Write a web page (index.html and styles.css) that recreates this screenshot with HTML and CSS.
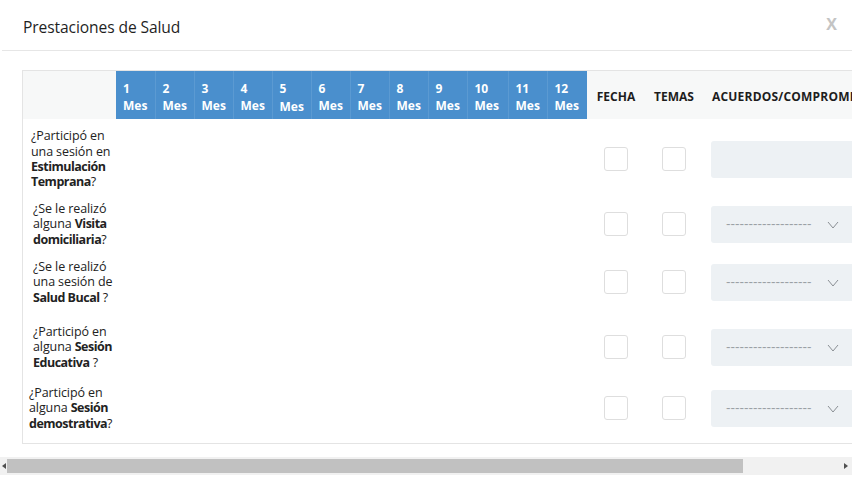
FILE: index.html
```html
<!DOCTYPE html>
<html lang="es">
<head>
<meta charset="utf-8">
<title>Prestaciones de Salud</title>
<link rel="stylesheet" href="styles.css">
</head>
<body>
<div class="modal">
  <div class="modal-header">
    <h1 class="title">Prestaciones de Salud</h1>
    <span class="close">X</span>
  </div>
  <div class="scroller">
    <div class="table-wrap">
      <table class="grid">
        <thead>
          <tr class="head-row">
            <th class="c-q"></th>
            <th class="c-m c-first">1<br>Mes</th>
            <th class="c-m">2<br>Mes</th>
            <th class="c-m">3<br>Mes</th>
            <th class="c-m">4<br>Mes</th>
            <th class="c-m">5<br><span class="low">Mes</span></th>
            <th class="c-m">6<br>Mes</th>
            <th class="c-m">7<br>Mes</th>
            <th class="c-m">8<br>Mes</th>
            <th class="c-m">9<br>Mes</th>
            <th class="c-m c-wide">10<br>Mes</th>
            <th class="c-m">11<br>Mes</th>
            <th class="c-m c-wide1">12<br>Mes</th>
            <th class="c-chk">FECHA</th>
            <th class="c-chk">TEMAS</th>
            <th class="c-acu">ACUERDOS/COMPROMISOS</th>
          </tr>
        </thead>
        <tbody>
          <tr class="r1">
            <td class="q">¿Participó en<br>una sesión en<br><b>Estimulación</b><br><b>Temprana</b>?</td>
            <td colspan="12"></td>
            <td class="chk-cell"><span class="chk"></span></td>
            <td class="chk-cell"><span class="chk"></span></td>
            <td class="acu"><div class="field"></div></td>
          </tr>
          <tr class="r2">
            <td class="q q-in">¿Se le realizó<br>alguna <b>Visita</b><br><b>domiciliaria</b>?</td>
            <td colspan="12"></td>
            <td class="chk-cell"><span class="chk"></span></td>
            <td class="chk-cell"><span class="chk"></span></td>
            <td class="acu"><div class="field select"><span class="dashes">-------------------</span><svg class="chev" width="12" height="8" viewBox="0 0 12 8"><path d="M1 1 L6 7 L11 1" fill="none" stroke="#8a8f94" stroke-width="1"/></svg></div></td>
          </tr>
          <tr class="r3">
            <td class="q q-in">¿Se le realizó<br>una sesión de<br><b>Salud Bucal</b> ?</td>
            <td colspan="12"></td>
            <td class="chk-cell"><span class="chk"></span></td>
            <td class="chk-cell"><span class="chk"></span></td>
            <td class="acu"><div class="field select"><span class="dashes">-------------------</span><svg class="chev" width="12" height="8" viewBox="0 0 12 8"><path d="M1 1 L6 7 L11 1" fill="none" stroke="#8a8f94" stroke-width="1"/></svg></div></td>
          </tr>
          <tr class="r4">
            <td class="q q-in">¿Participó en<br>alguna <b>Sesión</b><br><b>Educativa</b> ?</td>
            <td colspan="12"></td>
            <td class="chk-cell"><span class="chk"></span></td>
            <td class="chk-cell"><span class="chk"></span></td>
            <td class="acu"><div class="field select"><span class="dashes">-------------------</span><svg class="chev" width="12" height="8" viewBox="0 0 12 8"><path d="M1 1 L6 7 L11 1" fill="none" stroke="#8a8f94" stroke-width="1"/></svg></div></td>
          </tr>
          <tr class="r5">
            <td class="q q-out">¿Participó en<br>alguna <b>Sesión</b><br><b>demostrativa</b>?</td>
            <td colspan="12"></td>
            <td class="chk-cell"><span class="chk"></span></td>
            <td class="chk-cell"><span class="chk"></span></td>
            <td class="acu"><div class="field select"><span class="dashes">-------------------</span><svg class="chev" width="12" height="8" viewBox="0 0 12 8"><path d="M1 1 L6 7 L11 1" fill="none" stroke="#8a8f94" stroke-width="1"/></svg></div></td>
          </tr>
        </tbody>
      </table>
    </div>
  </div>
  <div class="hscroll">
    <span class="arrow arrow-left"></span>
    <div class="track"><div class="thumb"></div></div>
    <span class="arrow arrow-right"></span>
  </div>
</div>
</body>
</html>
```

FILE: styles.css
```css
html, body {
  margin: 0;
  padding: 0;
  background: #ffffff;
}

body {
  font-family: "Open Sans", "Noto Sans", sans-serif;
  color: #222222;
  width: 852px;
  height: 477px;
  overflow: hidden;
}

.modal {
  display: flex;
  flex-direction: column;
  height: 477px;
}

.modal-header {
  height: 51px;
  flex-shrink: 0;
  border-bottom: 1px solid #e6e6e6;
  display: flex;
  align-items: center;
  justify-content: space-between;
  padding: 4px 15px 0 21px;
  box-sizing: border-box;
  margin-left: 2px;
}

.title {
  margin: 0;
  font-size: 15.6px;
  font-weight: 400;
  color: #1f1f1f;
  letter-spacing: -0.1px;
}

.close {
  font-size: 16px;
  font-weight: 700;
  color: #c4c4c4;
  margin-top: -6px;
}

.scroller {
  overflow: hidden;
  padding: 19px 0 0 22px;
  height: 406px;
  flex-shrink: 0;
  box-sizing: border-box;
}

.table-wrap {
  border: 1px solid #e4e4e4;
  width: max-content;
  padding-bottom: 6px;
}

.grid {
  border-collapse: collapse;
  table-layout: fixed;
}

.head-row {
  height: 48px;
  background: #f7f8f8;
}

.head-row th {
  padding: 0;
  font-size: 12px;
  font-weight: 700;
  vertical-align: middle;
}

.c-q {
  width: 93px;
}

.c-m {
  width: 39px;
  box-sizing: border-box;
  background: #4a8fcd;
  color: #ffffff;
  text-align: left;
  padding-left: 7px !important;
  padding-top: 3px !important;
  line-height: 17px;
  border-left: 1px solid #5b9ad2;
}

.c-first {
  border-left: none;
}

.c-wide {
  width: 41px;
}

.c-wide1 {
  width: 40px;
}

.low {
  position: relative;
  top: 1px;
}

.c-chk {
  width: 58px;
  text-align: center;
  color: #1d1d1d;
  padding-top: 2px !important;
}

.c-acu {
  width: 190px;
  text-align: left;
  padding-left: 9px !important;
  padding-top: 2px !important;
  color: #1d1d1d;
  white-space: nowrap;
  letter-spacing: 0.2px;
}

.r1 { height: 80px; }
.r2 { height: 50px; }
.r3 { height: 66px; }
.r4 { height: 64px; }
.r5 { height: 58px; }

.grid td {
  padding: 0;
  vertical-align: middle;
}

.q {
  font-size: 12.5px;
  line-height: 15.4px;
  padding-left: 8px !important;
  color: #222222;
  white-space: nowrap;
  overflow: hidden;
  letter-spacing: -0.1px;
}

.q b {
  font-weight: 700;
  letter-spacing: -0.5px;
}

.q-in {
  padding-left: 10px !important;
}

.q-out {
  padding-left: 6px !important;
}

.chk-cell {
  text-align: center;
}

.chk {
  display: inline-block;
  width: 22px;
  height: 22px;
  border: 1px solid #dedede;
  border-radius: 3px;
  background: #ffffff;
  vertical-align: middle;
}

.acu {
  padding-left: 8px !important;
  padding-right: 8px !important;
}

.field {
  height: 37px;
  background: #edf1f4;
  border-radius: 3px;
}

.select {
  display: flex;
  align-items: center;
  padding-left: 15px;
  box-sizing: border-box;
}

.dashes {
  font-size: 13.5px;
  line-height: 16px;
  color: #9aa0a5;
  font-family: "Liberation Sans", sans-serif;
}

.chev {
  margin-left: 16px;
  margin-top: 1px;
}

.hscroll {
  height: 18px;
  flex-shrink: 0;
  background: #f1f1f1;
  display: flex;
  align-items: center;
}

.track {
  flex: 1;
  height: 14px;
  display: flex;
}

.thumb {
  width: 736px;
  height: 14px;
  background: #c1c1c1;
}

.arrow {
  width: 0;
  height: 0;
  border-top: 3px solid transparent;
  border-bottom: 3px solid transparent;
}

.arrow-left {
  border-right: 4px solid #505050;
  margin: 0 1px 0 2px;
}

.arrow-right {
  border-left: 4px solid #505050;
  margin: 0 4px 0 2px;
}
```
